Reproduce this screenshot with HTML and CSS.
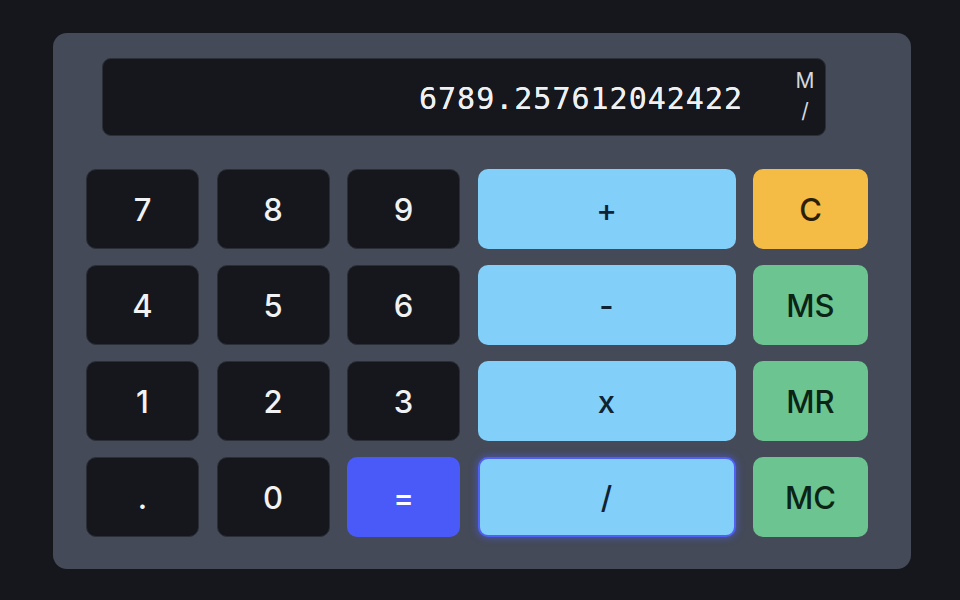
FILE: index.html
```html
<!DOCTYPE html>
<html>
<head>
<meta charset="utf-8">
<link rel="stylesheet" href="styles.css">
</head>
<body>
<div class="calc">
  <div class="display">
    <div class="value">6789.257612042422</div>
    <div class="mem"><span>M</span><span>/</span></div>
  </div>
  <div class="keys">
    <button class="k num">7</button>
    <button class="k num">8</button>
    <button class="k num">9</button>
    <button class="k op">+</button>
    <button class="k clr">C</button>
    <button class="k num">4</button>
    <button class="k num">5</button>
    <button class="k num">6</button>
    <button class="k op">-</button>
    <button class="k memk">MS</button>
    <button class="k num">1</button>
    <button class="k num">2</button>
    <button class="k num">3</button>
    <button class="k op">x</button>
    <button class="k memk">MR</button>
    <button class="k num">.</button>
    <button class="k num">0</button>
    <button class="k eq">=</button>
    <button class="k op focus">/</button>
    <button class="k memk">MC</button>
  </div>
</div>
</body>
</html>
```
FILE: styles.css
```css
html, body {
  margin: 0;
  padding: 0;
  background: #15171c;
  width: 960px;
  height: 600px;
  overflow: hidden;
}
body {
  font-family: "Inter", "Liberation Sans", sans-serif;
}
.calc {
  box-sizing: border-box;
  margin: 33px 0 0 53px;
  width: 858px;
  height: 536px;
  background: #444a57;
  border-radius: 14px;
  padding: 25px 44px 0 33px;
}
.display {
  box-sizing: border-box;
  margin: 0 41px 0 16px;
  height: 78px;
  background: #15171c;
  border: 1px solid #2b2f38;
  border-radius: 9px;
  display: flex;
  align-items: center;
  color: #eef0f3;
}
.value {
  flex: 1;
  text-align: right;
  font-family: "DejaVu Sans Mono", "Liberation Mono", monospace;
  font-size: 30px;
  letter-spacing: 1px;
  margin-top: 3px;
  text-shadow: 0 0 0.4px #eef0f3;
}
.mem {
  width: 24px;
  margin: 0 8px 2px 50px;
  display: flex;
  flex-direction: column;
  align-items: center;
  font-size: 21px;
  line-height: 30px;
  color: #d4d7dd;
}
.keys {
  margin-top: 33px;
  display: grid;
  grid-template-columns: 113px 113px 113px 258px 115px;
  grid-template-rows: repeat(4, 80px);
  column-gap: 17.5px;
  row-gap: 16px;
}
.k {
  box-sizing: border-box;
  border: 1px solid transparent;
  border-radius: 10px;
  font-family: "Inter", "Liberation Sans", sans-serif;
  font-size: 31px;
  font-weight: 500;
  padding: 0;
  margin: 0;
}
.num {
  background: #15171c;
  border-color: #2a2e37;
  color: #f1f2f4;
}
.op {
  background: #82cffa;
  color: #0f2231;
}
.eq {
  background: #4a5af8;
  color: #ffffff;
}
.clr {
  background: #f4bb45;
  color: #2b1f05;
}
.memk {
  background: #6cc591;
  color: #0b2416;
}
.focus {
  border: 2px solid #5060f2;
  box-shadow: 0 0 7px 1px rgba(80, 96, 242, 0.55);
}
```
